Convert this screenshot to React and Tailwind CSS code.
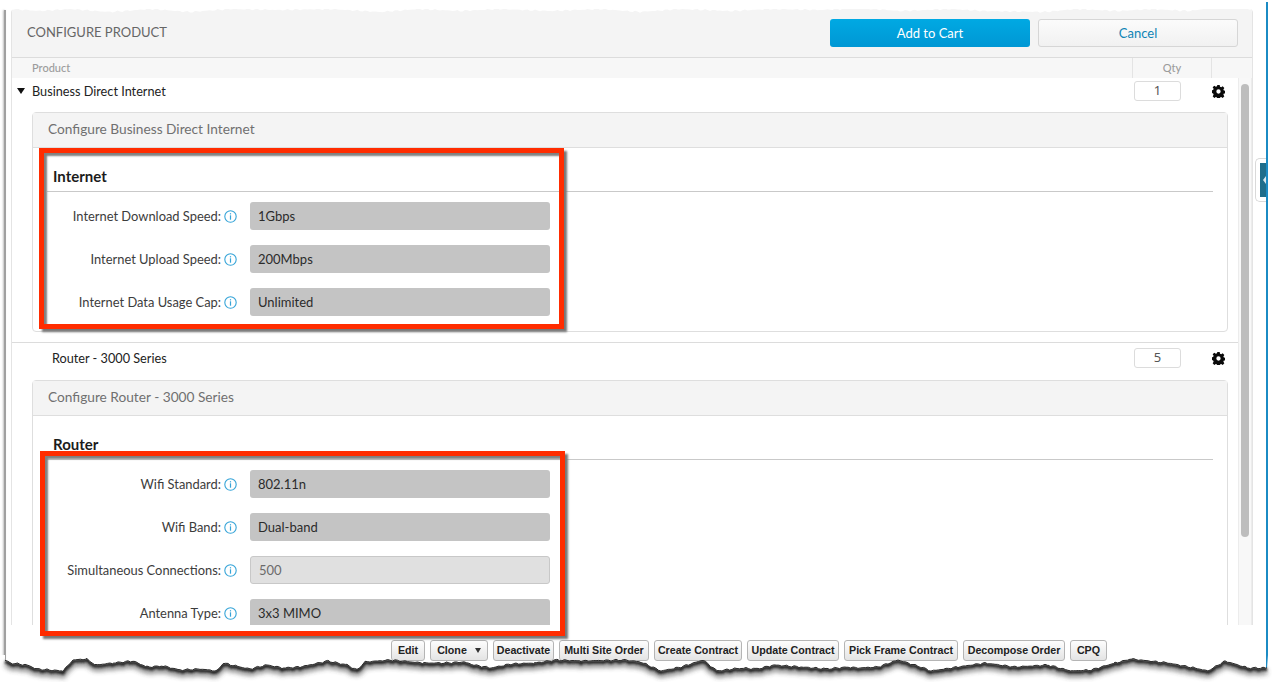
import React from 'react';

const font = "font-['Lato','Noto_Sans',sans-serif]";

const InfoIcon = () => (
  <svg width="13" height="13" viewBox="0 0 13 13" fill="none" className="shrink-0">
    <circle cx="6.5" cy="6.5" r="5.7" stroke="#35a4d8" strokeWidth="1.1" />
    <rect x="5.9" y="5.3" width="1.2" height="4.400" fill="#35a4d8" />
    <rect x="5.9" y="3.200" width="1.2" height="1.200" fill="#35a4d8" />
  </svg>
);

const Gear = () => (
  <svg width="13" height="13" viewBox="0 0 24 24" fill="#0a0a0a">
    <path d="M9.800 0h4.400l.6 3.200 2.200.9 2.700-1.800 3.100 3.100-1.800 2.700.9 2.200 3.100.6v4.400l-3.100.6-.9 2.200 1.800 2.700-3.100 3.100-2.700-1.800-2.200.9-.6 3.200H9.800l-.6-3.200-2.200-.9-2.700 1.800-3.100-3.100 1.800-2.700-.9-2.200L-1 14.200V9.800l3.100-.6.9-2.200-1.800-2.700 3.100-3.100 2.700 1.800 2.200-.9zM12 8a4 4 0 1 0 0 8 4 4 0 0 0 0-8z" fillRule="evenodd" />
  </svg>
);

const Field = ({ label, value, disabled }) => (
  <div className="flex items-center h-[28px]">
    <div className="w-[174px] pt-[1px] text-right text-[12.9px] text-[#3c3c3c] shrink-0 whitespace-nowrap">{label}</div>
    <div className="w-[3px] shrink-0" />
    <InfoIcon />
    <div className="w-[13px] shrink-0" />
    <div className={`w-[300px] h-[28px] rounded-[3px] flex items-center pt-[1px] pl-[8px] text-[13px] ${disabled ? 'bg-[#e0e0e0] border border-[#c8c8c8] text-[#6b6b6b]' : 'bg-[#c4c4c4] text-[#2b2b2b]'}`}>
      {value}
    </div>
  </div>
);

const ProductRow = ({ name, qty, caret, rowClass }) => (
  <div className={`flex items-center ${rowClass}`}>
    <div className="w-[20px] flex justify-center shrink-0 -ml-[1px] mr-[1px]">
      {caret && <span className="w-0 h-0 border-l-[4px] border-r-[4px] border-t-[6px] border-l-transparent border-r-transparent border-t-[#111]" />}
    </div>
    <div className="flex-1 pt-[1px] text-[12.7px] text-[#222]">{name}</div>
    <div className="w-[47px] h-[20px] border border-[#dcdcdc] rounded-[3px] flex items-center justify-center text-[13px] text-[#555] font-['Noto_Sans',sans-serif]">{qty}</div>
    <div className="w-[44px] flex justify-end"><Gear /></div>
    <div className="w-[13px]" />
  </div>
);

const Card = ({ title, section, fields, cardClass }) => (
  <div className={`ml-[20px] mr-[10px] border border-[#dedede] rounded-t-[4px] ${cardClass}`}>
    <div className="h-[35px] bg-[#f4f4f4] border-b border-[#dedede] flex items-center pb-[2px] pl-[15px] text-[13.7px] text-[#707070]">{title}</div>
    <div className="px-[14px]">
      <div className="h-[44px] border-b border-[#c9c9c9] flex items-end pb-[4px] pl-[6px] text-[15px] font-bold text-[#1c1c1c]">{section}</div>
      <div className="flex flex-col gap-[15px] pt-[10px]">
        {fields.map((f) => <Field key={f.label} {...f} />)}
      </div>
    </div>
  </div>
);

const actions = [
  { label: 'Edit', width: 'w-[34px]' },
  { label: 'Clone', width: 'w-[58px]' },
  { label: 'Deactivate', width: 'w-[61px]' },
  { label: 'Multi Site Order', width: 'w-[90px]' },
  { label: 'Create Contract', width: 'w-[88px]' },
  { label: 'Update Contract', width: 'w-[92px]' },
  { label: 'Pick Frame Contract', width: 'w-[114px]' },
  { label: 'Decompose Order', width: 'w-[102px]' },
  { label: 'CPQ', width: 'w-[37px]' },
];

// torn paper edges: hand sampled outline + a bit of noise
const bottomPts = [[5,660],[10,663],[27,665],[37,669],[63,671],[73,660],[87,659],[95,665],[113,663],[133,661],[147,667],[163,666],[180,670],[200,669],[217,671],[223,663],[240,667],[250,669],[267,665],[283,668],[300,667],[328,661],[347,665],[357,670],[365,662],[390,660],[424,663],[444,663],[464,662],[474,665],[491,668],[511,664],[534,663],[557,660],[581,661],[624,660],[641,662],[661,671],[681,667],[703,660],[717,671],[741,668],[757,669],[774,665],[801,667],[827,669],[848,667],[858,668],[878,667],[898,660],[921,667],[931,671],[958,667],[985,663],[1015,667],[1048,665],[1071,671],[1091,670],[1115,663],[1131,659],[1168,663],[1195,668],[1208,671],[1225,661],[1248,668],[1267,668]];
const topPts = [[0,8],[40,11],[70,9],[110,12],[150,9],[190,12],[230,9],[280,10],[330,9],[380,12],[420,9],[460,11],[500,9],[550,11],[600,9],[640,12],[680,9],[730,11],[770,9],[820,10],[860,8],[900,11],[950,9],[985,11],[1045,12],[1075,9],[1120,11],[1150,9],[1190,11],[1210,8],[1256,9]];

const jag = (pts) => {
  const out = [];
  for (let i = 0; i < pts.length - 1; i++) {
    const [x0, y0] = pts[i];
    const [x1, y1] = pts[i + 1];
    for (let x = x0; x < x1; x += 2.5) {
      const t = (x - x0) / (x1 - x0);
      const noise = Math.sin(x * 1.7) * 0.45 + Math.sin(x * 0.63) * 0.45;
      out.push(`${x.toFixed(1)} ${(y0 + (y1 - y0) * t + noise).toFixed(1)}`);
    }
  }
  const last = pts[pts.length - 1];
  out.push(`${last[0]} ${last[1]}`);
  return out;
};

const bottomLine = jag(bottomPts);
const topLine = jag(topPts);
const bottomLinePath = 'M' + bottomLine.join('L');
const belowPath = 'M0 682L0 655L5 655L' + bottomLine.join('L') + 'L1268 655L1272 655L1272 682Z';
const abovePath = 'M0 0L' + topLine.join('L') + 'L1256 0Z';

export default function App() {
  return (
    <div className={`relative w-[1272px] h-[682px] overflow-hidden bg-white ${font}`}>
      {/* window edges */}
      <div className="absolute left-[4px] top-[10px] bottom-[20px] w-[2px] bg-[#a0a0a0] shadow-[-1px_0_2px_rgba(0,0,0,0.25)]" />
      <div className="absolute left-[1266px] top-[2px] bottom-[14px] w-[2px] bg-[#1b8bc4]" />

      <div className="ml-[11px] w-[1242px] pt-[9px]">
        <div className="h-[616px] overflow-hidden border-x border-[#e4e4e4] rounded-t-[4px]">
          <div className="h-[49px] bg-[#f4f4f4] border-b border-[#dcdcdc] flex items-center pl-[15px] pr-[14px]">
            <span className="flex-1 text-[13px] text-[#666] uppercase pb-[1px]">Configure Product</span>
            <button className="w-[200px] h-[28px] pt-[1px] rounded-[3px] bg-gradient-to-b from-[#00a9e3] to-[#0097d4] text-white text-[13px]">Add to Cart</button>
            <button className="ml-[8px] w-[200px] h-[28px] pt-[1px] rounded-[3px] border border-[#d6d6d6] bg-gradient-to-b from-[#fbfbfb] to-[#f1f1f1] text-[#0f84b5] text-[13px]">Cancel</button>
          </div>
          <div className="h-[20px] bg-[#f7f7f7] flex items-center text-[11px] text-[#9c9c9c] font-medium">
            <span className="pl-[20px] flex-1">Product</span>
            <span className="w-[80px] h-full border-x border-[#e4e4e4] flex items-center justify-center">Qty</span>
            <span className="w-[40px]" />
          </div>
          <div className="flex">
            <div className="w-[1226px] shrink-0">
              <ProductRow name="Business Direct Internet" qty="1" caret rowClass="h-[26px]" />
              <div className="pt-[8px]">
                <Card
                  title="Configure Business Direct Internet"
                  section="Internet"
                  fields={[
                    { label: 'Internet Download Speed:', value: '1Gbps' },
                    { label: 'Internet Upload Speed:', value: '200Mbps' },
                    { label: 'Internet Data Usage Cap:', value: 'Unlimited' },
                  ]}
                  cardClass="rounded-b-[4px] h-[220px]"
                />
              </div>
              <div className="mt-[10px] border-t border-[#dcdcdc]" />
              <ProductRow name="Router - 3000 Series" qty="5" rowClass="h-[30px] pl-[20px]" />
              <div className="pt-[7px]">
                <Card
                  title="Configure Router - 3000 Series"
                  section="Router"
                  fields={[
                    { label: 'Wifi Standard:', value: '802.11n' },
                    { label: 'Wifi Band:', value: 'Dual-band' },
                    { label: 'Simultaneous Connections:', value: '500', disabled: true },
                    { label: 'Antenna Type:', value: '3x3 MIMO' },
                  ]}
                />
              </div>
            </div>
            <div className="flex-1 bg-[#f8f8f8] border-x border-[#ececec] h-[547px]">
              <div className="mx-auto mt-[6px] w-[8px] h-[453px] rounded-[4px] bg-[#bdbdbd]" />
            </div>
          </div>
        </div>
      </div>

      {/* action bar */}
      <div className="mt-[15px] ml-[391px] flex items-center gap-[5px]">
        {actions.map((a) => (
          <button key={a.label} className={`${a.width} h-[21px] flex items-center justify-center gap-[8px] border border-[#b5b5b5] rounded-[3px] bg-gradient-to-b from-[#fdfdfd] to-[#e4e4e4] text-[10.7px] font-bold text-[#222] whitespace-nowrap font-['Liberation_Sans',sans-serif]`}>
            {a.label}
            {a.label === 'Clone' && <span className="w-0 h-0 border-l-[3px] border-r-[3px] border-t-[5px] border-l-transparent border-r-transparent border-t-[#333]" />}
          </button>
        ))}
      </div>

      {/* collapse tab on the right edge */}
      <div className="absolute left-[1255px] top-[158px] w-[11px] h-[44px] border border-r-0 border-[#d9d9d9] rounded-l-[5px] bg-white pl-[4px] py-[4px]">
        <div className="h-full bg-[#1f6e8c] flex items-center pl-[3px]">
          <span className="w-0 h-0 border-y-[4px] border-r-[3px] border-y-transparent border-r-[#d8e8ee]" />
        </div>
      </div>

      {/* annotation boxes */}
      <div className="absolute left-[39px] top-[148px] w-[525px] h-[181px] border-[5px] border-[#ff2c00] shadow-[3px_3px_2px_#777,inset_3px_3px_2px_#808080]" />
      <div className="absolute left-[40px] top-[451px] w-[525px] h-[185px] border-[5px] border-[#ff2c00] shadow-[3px_3px_2px_#777,inset_3px_3px_2px_#808080]" />

      {/* torn screenshot edges */}
      <svg className="absolute inset-0 pointer-events-none" width="1272" height="682" viewBox="0 0 1272 682">
        <defs>
          <clipPath id="below"><path d={belowPath} /></clipPath>
          <filter id="soft" x="-5%" y="-500%" width="110%" height="1100%"><feGaussianBlur stdDeviation="1.2" /></filter>
          <filter id="wide" x="-5%" y="-500%" width="110%" height="1100%"><feGaussianBlur stdDeviation="2.6" /></filter>
        </defs>
        <path d={abovePath} fill="#fff" />
        <path d={belowPath} fill="#fff" />
        <g clipPath="url(#below)">
          <path d={bottomLinePath} fill="none" stroke="#333" strokeWidth="5" opacity="0.6" transform="translate(0 4)" filter="url(#wide)" />
          <path d={bottomLinePath} fill="none" stroke="#1a1a1a" strokeWidth="3" transform="translate(0 1.500)" filter="url(#soft)" />
        </g>
        <path d={bottomLinePath} fill="none" stroke="#2a2a2a" strokeWidth="1" />
      </svg>
    </div>
  );
}
